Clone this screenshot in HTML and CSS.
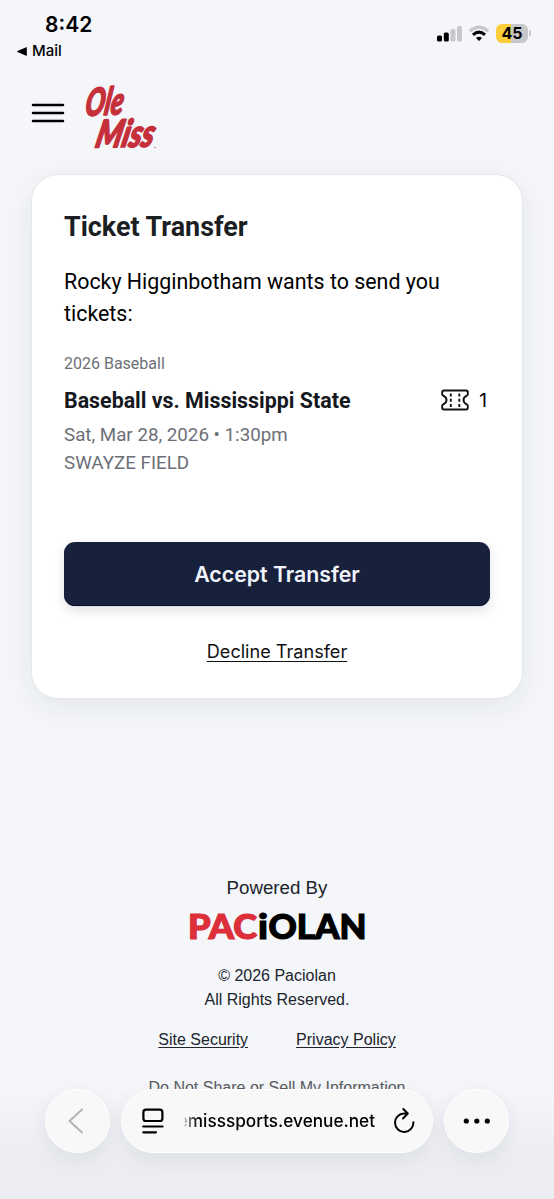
FILE: index.html
```html
<!DOCTYPE html>
<html lang="en">
<head>
<meta charset="utf-8">
<title>Ticket Transfer</title>
<link rel="stylesheet" href="styles.css">
</head>
<body>
<div class="status">
  <div class="status-left">
    <div class="clock">8:42</div>
    <div class="back-app"><svg width="10" height="9" viewBox="0 0 10 9"><path d="M9.8 0v9L0.5 4.9q-.6-.4 0-.8z"/></svg><span>Mail</span></div>
  </div>
  <div class="status-right">
    <svg width="26" height="17" viewBox="0 0 26 17"><rect x="0" y="10.5" width="5" height="6" rx="1.6"/><rect x="6.8" y="7.5" width="5" height="9" rx="1.6"/><rect x="13.4" y="4" width="5" height="12.5" rx="1.6" fill="#c7c8ca"/><rect x="20" y="1" width="5" height="15.5" rx="1.6" fill="#c7c8ca"/></svg>
    <svg class="wifi" width="22" height="17" viewBox="0 0 22 17" fill="none"><path d="M1.8 6.2Q11-2 20.2 6.2" stroke="#c7c8ca" stroke-width="3.2"/><path d="M5 9.9Q11 4.4 17 9.9" stroke="#000" stroke-width="3"/><path d="M8 13Q11 10.4 14 13L11 16z" fill="#000"/></svg>
    <div class="battery"><span>45</span></div><i class="battery-tip"></i>
  </div>
</div>
<header class="header">
  <div class="menu"><i></i><i></i><i></i></div>
  <svg class="school-logo" width="76" height="70" viewBox="0 0 76 70">
    <text transform="translate(0 34) rotate(-3) skewX(-12)" font-size="38" textLength="38" lengthAdjust="spacingAndGlyphs">Ole</text>
    <text transform="translate(10 65.5) rotate(-1) skewX(-14)" font-size="38" textLength="58" lengthAdjust="spacingAndGlyphs">Miss</text>
    <circle cx="71" cy="65.5" r=".3" stroke-width=".8"/>
  </svg>
</header>
<main class="card">
  <h1>Ticket Transfer</h1>
  <p class="lead">Rocky Higginbotham wants to send you tickets:</p>
  <div class="season">2026 Baseball</div>
  <div class="event">
    <h2>Baseball vs. Mississippi State</h2>
    <div class="count">
      <svg width="28" height="22" viewBox="0 0 28 22" fill="none" stroke="#111" stroke-width="1.9"><path d="M3 1.5H25Q26.8 1.5 26.8 3.3V5.1Q26.8 6.2 25.8 6.7C21.4 8.7 21.4 13.3 25.8 15.3Q26.8 15.8 26.8 16.9V18.7Q26.8 20.5 25 20.5H3Q1.2 20.5 1.2 18.7V16.9Q1.2 15.8 2.2 15.3C6.6 13.3 6.6 8.7 2.2 6.7Q1.2 6.2 1.2 5.1V3.3Q1.2 1.5 3 1.5Z"/><path d="M9.8 4.5V18M18.3 4.5V18" stroke-dasharray="3 2.2"/></svg>
      <span>1</span>
    </div>
  </div>
  <div class="details">Sat, Mar 28, 2026 • 1:30pm</div>
  <div class="details venue">SWAYZE FIELD</div>
  <button class="accept">Accept Transfer</button>
  <a class="decline">Decline Transfer</a>
</main>
<footer class="footer">
  <div class="powered">Powered By</div>
  <svg class="brand" width="176" height="30" viewBox="0 0 176 30">
    <text class="red" x="-1" y="26.5" textLength="69" lengthAdjust="spacingAndGlyphs">PAC</text>
    <text x="69" y="26.5" textLength="10" lengthAdjust="spacingAndGlyphs">i</text>
    <text x="79.5" y="26.5" textLength="98" lengthAdjust="spacingAndGlyphs">OLAN</text>
  </svg>
  <div class="copy">© 2026 Paciolan<br>All Rights Reserved.</div>
  <nav class="links"><a>Site Security</a><a>Privacy Policy</a></nav>
  <div class="privacy">Do Not Share or Sell My Information</div>
</footer>
<div class="browser">
  <div class="round"><svg width="16" height="26" viewBox="0 0 16 26" fill="none" stroke="#b3b3b4" stroke-width="2" stroke-linecap="round" stroke-linejoin="round"><path d="M14 1.5L1.5 13L14 24.5"/></svg></div>
  <div class="address">
    <svg class="page-icon" width="22" height="26" viewBox="0 0 22 26" fill="none" stroke="#000" stroke-width="2.2" stroke-linecap="round"><rect x="1.4" y="1.7" width="19" height="11.3" rx="2.6"/><path d="M1.3 18.5H20.5M1.3 24.3H14"/></svg>
    <div class="url"><span class="host">emisssports.evenue.net</span></div>
    <svg class="reload" width="22" height="26" viewBox="0 0 22 26" fill="none" stroke="#000" stroke-width="2" stroke-linecap="round" stroke-linejoin="round"><path d="M14.5 5.5H11A9.2 9.2 0 1 0 20.4 14.2M10.3 1L14.8 5.5L10 10.5"/></svg>
  </div>
  <div class="round"><svg width="28" height="6" viewBox="0 0 28 6"><circle cx="3.3" cy="3" r="2.6"/><circle cx="13.8" cy="3" r="2.6"/><circle cx="24.3" cy="3" r="2.6"/></svg></div>
</div>
</body>
</html>
```
FILE: styles.css
```css
* { box-sizing: border-box; }
body { margin: 0; height: 1199px; overflow: hidden; position: relative; background: #f4f6fa; color: #000; font-family: Roboto, sans-serif; }
svg { display: block; flex: none; }
.status { height: 77px; display: flex; justify-content: space-between; font-family: Inter, sans-serif; }
.status-left { padding: 13px 0 0 17px; }
.clock { margin-left: 28px; font-size: 21px; line-height: 24px; font-weight: 600; }
.back-app { display: flex; align-items: center; gap: 5px; margin-top: 5px; font-size: 15px; line-height: 18px; font-weight: 500; }
.status-right { display: flex; align-items: center; height: 20px; margin: 23px 23px 0 0; }
.wifi { margin: 0 6px 0 5px; }
.battery { width: 32px; height: 19px; border-radius: 6px; background: linear-gradient(90deg, #fbcf3c 47%, #c7c8ca 47%); font-size: 16px; line-height: 19px; font-weight: 700; text-align: center; }
.battery-tip { width: 2px; height: 6px; margin-left: 1px; border-radius: 0 2px 2px 0; background: #c7c8ca; }
.header { height: 98px; padding: 5px 0 0 32px; display: flex; align-items: flex-start; gap: 20px; }
.menu { width: 32px; padding-top: 22px; display: grid; gap: 6px; }
.menu i { height: 2px; border-radius: 1px; background: #000; box-shadow: 0 0 0 .25px #000; }
.school-logo { fill: #c5303a; stroke: #c5303a; stroke-width: 1.7; stroke-linejoin: round; font-family: Lato, sans-serif; font-weight: 900; font-style: italic; overflow: visible; }
.card { width: 490px; height: 523px; margin-left: 32px; padding: 33px 32px 0; border-radius: 26px; background: #fff; box-shadow: 0 0 0 1px #e6e7eb, 0 8px 30px rgba(30,35,55,.08); display: flex; flex-direction: column; }
h1, h2, p { margin: 0; }
h1 { font-size: 26.9px; line-height: 38px; font-weight: 700; color: #1b1f23; }
.lead { margin-top: 20px; font-size: 21.4px; line-height: 32px; }
.season { margin-top: 24px; font-size: 16px; line-height: 20px; color: #6d6f78; }
.event { display: flex; justify-content: space-between; align-items: center; margin-top: 11px; height: 32px; }
h2 { font-size: 21.4px; line-height: 32px; font-weight: 700; color: #15181c; }
.count { display: flex; align-items: center; gap: 10px; font-size: 19px; font-family: Inter, sans-serif; padding-right: 2px; margin: -2px 1px 0 0; }
.details { margin-top: 4px; font-size: 18.75px; line-height: 28px; color: #6d6f78; }
.venue { margin-top: 0; }
.accept { margin: 65px 0 0; height: 64px; width: 426px; border: 0; border-radius: 11px; background: #18213c; color: #f1f4fb; font: 600 21.3px Inter, sans-serif; box-shadow: inset 0 -1px #080d24, 0 1px #d9dced, 0 5px 12px rgba(20,25,50,.12); }
.decline { align-self: center; margin-top: 31px; font: 400 18.1px/28px Inter, sans-serif; text-decoration: underline; text-underline-offset: 3px; color: #111; }
.footer { padding-top: 177px; display: flex; flex-direction: column; align-items: center; font-family: "Liberation Sans", Arial, sans-serif; color: #20242c; }
.powered { font-size: 18.7px; line-height: 26px; }
.brand { margin: 11px 0 0; font: 900 34px Lato, sans-serif; stroke: #000; stroke-width: 1.2; overflow: visible; }
.red { fill: #dc2f3a; stroke: #dc2f3a; }
.copy { margin-top: 22px; font-size: 16px; line-height: 24px; text-align: center; }
.links { display: flex; gap: 48px; margin-top: 16px; font-size: 16px; line-height: 24px; }
.links a { text-decoration: underline; text-underline-offset: 2px; }
.privacy { margin-top: 24px; font-size: 16px; line-height: 24px; color: #595b61; }
.browser { position: absolute; left: 0; right: 0; bottom: 0; height: 110px; padding: 0 45px; display: flex; gap: 11px; background: linear-gradient(180deg, rgba(236,238,243,0), #ebedf1 65%); }
.round, .address { height: 64px; border-radius: 32px; background: #f8f8f8; border: 1px solid #fff; display: flex; align-items: center; box-shadow: 0 6px 20px rgba(20,25,50,.07); }
.round { width: 65px; flex: none; justify-content: center; }
.round:first-child svg { margin-right: 3px; }
.address { flex: 1; padding: 0 17px 0 20px; }
.url { flex: 1; display: flex; justify-content: flex-end; align-items: center; font: 500 17.2px/24px Inter, sans-serif; padding-right: 18px; }
.host { background: linear-gradient(90deg, transparent 6px, #bbb 7px, #777 11px, #000 20px); background-clip: text; -webkit-background-clip: text; color: transparent; }
```
